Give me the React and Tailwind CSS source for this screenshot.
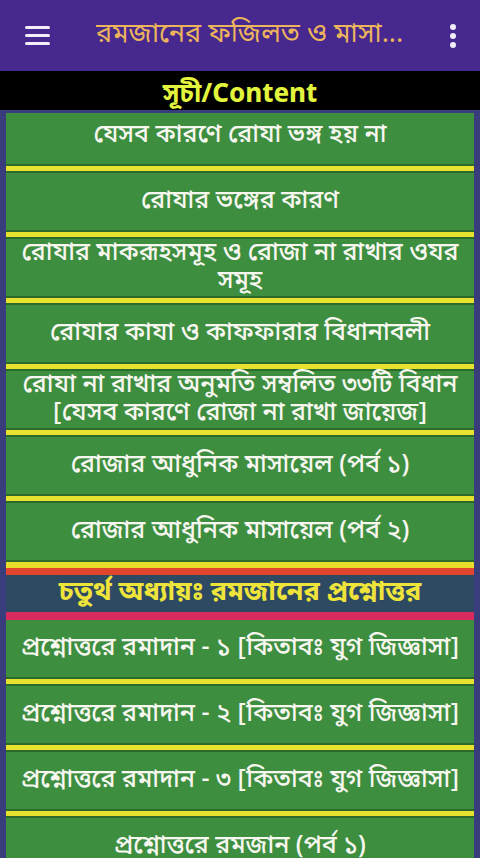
import React from 'react';

const TOP_ITEMS = [
  ['যেসব কারণে রোযা ভঙ্গ হয় না'],
  ['রোযার ভঙ্গের কারণ'],
  ['রোযার মাকরূহসমূহ ও রোজা না রাখার ওযর', 'সমূহ'],
  ['রোযার কাযা ও কাফফারার বিধানাবলী'],
  ['রোযা না রাখার অনুমতি সম্বলিত ৩৩টি বিধান', '[যেসব কারণে রোজা না রাখা জায়েজ]'],
  ['রোজার আধুনিক মাসায়েল (পর্ব ১)'],
  ['রোজার আধুনিক মাসায়েল (পর্ব ২)'],
];

const BOTTOM_ITEMS = [
  ['প্রশ্নোত্তরে রমাদান - ১ [কিতাবঃ যুগ জিজ্ঞাসা]'],
  ['প্রশ্নোত্তরে রমাদান - ২ [কিতাবঃ যুগ জিজ্ঞাসা]'],
  ['প্রশ্নোত্তরে রমাদান - ৩ [কিতাবঃ যুগ জিজ্ঞাসা]'],
  ['প্রশ্নোত্তরে রমজান (পর্ব ১)'],
];

const bn = { fontFamily: '"Noto Sans Bengali", "Noto Sans", "Liberation Sans", sans-serif' };

function Separator() {
  return <div className="h-[9px] shrink-0 border-y-2 border-[#2c6a2c] bg-[#e6e22f]" />;
}

function Item({ lines }) {
  return (
    <div className="flex h-[57px] shrink-0 flex-col items-center justify-center bg-[#3e8e40] px-1 text-center">
      {lines.map((line) => (
        <p key={line} className="whitespace-nowrap text-[25px] font-medium leading-[28px] text-[#f7f7f0]" style={bn}>
          {line}
        </p>
      ))}
    </div>
  );
}

export default function App() {
  return (
    <div className="flex h-[858px] w-[480px] flex-col overflow-hidden bg-[#3a3d7c]">
      <header className="flex h-[71px] shrink-0 items-center bg-[#47288f] pl-[25px] pr-[24px]">
        <div className="flex w-[25px] flex-col gap-[5px]">
          <span className="h-[3px] w-[25px] rounded-sm bg-[#f3eef8]" />
          <span className="h-[3px] w-[25px] rounded-sm bg-[#f3eef8]" />
          <span className="h-[3px] w-[25px] rounded-sm bg-[#f3eef8]" />
        </div>
        <h1 className="ml-[46px] flex-1 truncate text-[27px] text-[#ecb55c]" style={bn}>
          রমজানের ফজিলত ও মাসা...
        </h1>
        <div className="flex flex-col items-center gap-[3px]">
          <span className="h-[6px] w-[6px] rounded-full bg-[#f3eef8]" />
          <span className="h-[6px] w-[6px] rounded-full bg-[#f3eef8]" />
          <span className="h-[6px] w-[6px] rounded-full bg-[#f3eef8]" />
        </div>
      </header>

      <div className="flex h-[39px] shrink-0 items-center justify-center bg-black pt-[10px]">
        <h2 className="text-[26px] font-bold leading-none text-[#e2f43c]" style={bn}>
          সূচী/Content
        </h2>
      </div>

      <div className="mt-[3px] flex-1 overflow-hidden px-[6px]">
        <div className="-mt-[6px] flex flex-col">
          {TOP_ITEMS.map((lines, i) => (
            <React.Fragment key={lines[0]}>
              <Item lines={lines} />
              {i < TOP_ITEMS.length - 1 && <Separator />}
            </React.Fragment>
          ))}

          <div className="h-[2px] shrink-0 bg-[#2c6a2c]" />
          <div className="h-[6px] shrink-0 bg-[#e6dc2c]" />
          <div className="h-[7px] shrink-0 bg-[#e0452e]" />

          <div className="flex h-[37px] shrink-0 items-center justify-center bg-[#2e4a62]">
            <p className="whitespace-nowrap text-[27px] font-bold leading-none text-[#efe43a]" style={bn}>
              চতুর্থ অধ্যায়ঃ রমজানের প্রশ্নোত্তর
            </p>
          </div>
          <div className="h-[8px] shrink-0 bg-[#d82a5c]" />

          {BOTTOM_ITEMS.map((lines, i) => (
            <React.Fragment key={lines[0]}>
              <Item lines={lines} />
              {i < BOTTOM_ITEMS.length - 1 && <Separator />}
            </React.Fragment>
          ))}
        </div>
      </div>
    </div>
  );
}
